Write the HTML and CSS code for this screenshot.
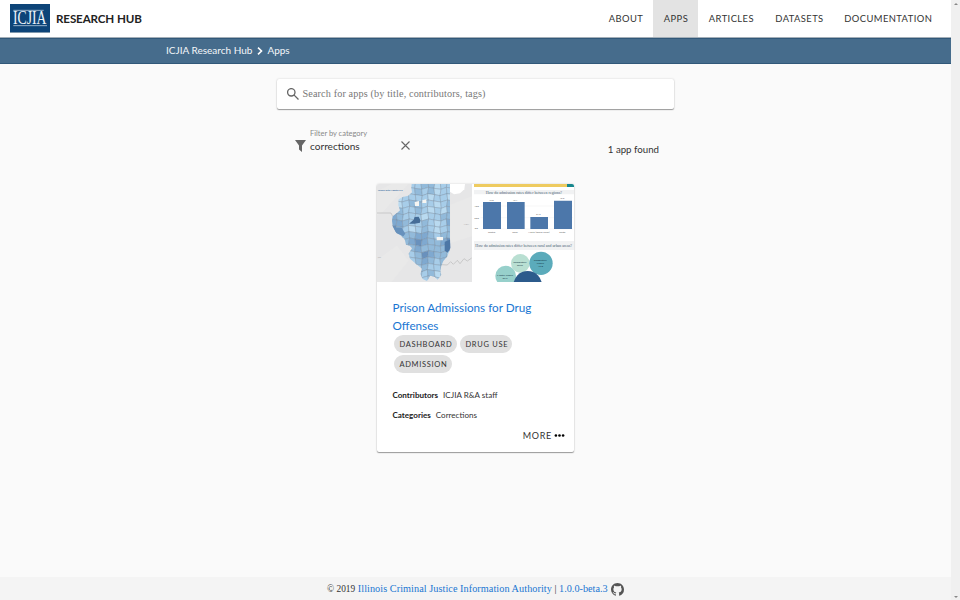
FILE: index.html
```html
<!DOCTYPE html>
<html lang="en">
<head>
<meta charset="utf-8">
<title>ICJIA Research Hub - Apps</title>
<link rel="stylesheet" href="styles.css">
</head>
<body>
<div class="page">
  <header class="topbar">
    <svg class="logo" viewBox="0 0 120 87"><path fill="#0d4478" d="M0 0h120v87H0z"/><path fill="#8098ad" d="M0 84h120v3H0z"/><path stroke="#dce8f1" stroke-width="2" d="M10 19h91M10 65h101"/><text x="9" y="59" textLength="100" lengthAdjust="spacingAndGlyphs" class="logo-text">ICJIA</text></svg>
    <span class="brand">RESEARCH HUB</span>
    <nav class="nav"><a class="about">ABOUT</a><a class="active">APPS</a><a class="articles">ARTICLES</a><a class="datasets">DATASETS</a><a class="docs">DOCUMENTATION</a></nav>
  </header>
  <div class="crumbs"><span>ICJIA Research Hub</span><svg viewBox="0 0 6 8"><path d="M1 .7 4.5 4 1 7.3" fill="none" stroke="#fff" stroke-width="1.6"/></svg><span>Apps</span></div>
  <main>
    <div class="search"><svg viewBox="0 0 12 12"><circle cx="4.3" cy="4.3" r="3.7"/><path d="m6.9 6.9 4.6 4.6"/></svg><span>Search for apps (by title, contributors, tags)</span></div>
    <div class="filters">
      <svg class="funnel" viewBox="0 0 11 12"><path d="M0 0h11L7 5.4V12L4 9.5V5.4z" fill="#666"/></svg>
      <div class="field"><label>Filter by category</label><span>corrections</span></div>
      <svg class="clear" viewBox="0 0 9 9"><path d="m.5.5 8 8m0-8-8 8" stroke="#666" stroke-width="1.1"/></svg>
      <span class="count">1 app found</span>
    </div>
    <article class="card">
      <div class="picture">
        <svg class="map" viewBox="21 18 285 294">
          <defs><clipPath id="state"><path d="M125 18H240V180L241 211 232 235 220 249 214 263 211 280 214 290 203 305 194 296 181 293 171 309 158 303 151 288 156 272 142 261 120 242 116 227 126 211 119 203 108 200 104 184 91 172 77 162 68 145 66 128 68 115 80 106 90 97 85 82 86 64 98 57 115 53 126 43 124 30z"/></clipPath></defs>
          <path fill="#e6e6e7" d="M21 18h285v294H21z"/>
          <path fill="#e9e9e9" d="M21 40 65 18h50L40 100 21 112zM21 245l60-42 35 45-51 64H21zM241 80l65-25v120l-65 20z"/>
          <path fill="#fff" d="M234 18h51l-2 16-13 12-18 3-12-8z"/>
          <path d="M21 105h42l5 10M214 260l18 1 10-10 8 8 12-12 8 10 12-15 10 7 13-9" fill="none" stroke="#aaa" stroke-width="1.5"/>
          <g id="counties" clip-path="url(#state)"></g>
          <path fill="#456d98" d="m117 137 14-12 3-8 12-1 5 10-1 8-16 3z"/>
          <path fill="#6791bc" d="m70 148 25 1 11 18-6 8-20-9z"/>
          <path fill="#4d77a6" d="m224 191 16-6 1 25-8 14-9-6z"/>
          <path fill="#f6f5f2" d="M134 72l13-3v15h-12zM157 67l12-3v11h-12zM200 177h19v10h-19z"/>
          <text class="map-title" x="24" y="39" textLength="75">Illinois Total Admits: n.a.</text>
          <text class="place" x="281" y="141">INDIA</text><text class="place" x="23" y="240">URI</text>
        </svg>
        <svg class="charts" viewBox="12 18 300 294">
          <path fill="#fff" d="M12 18h300v294H12z"/><path fill="#eecb60" d="M12 18h279v9H12z"/><path fill="#17878d" d="M291 18h21v9h-21z"/>
          <path fill="#f1f2f3" d="M12 36h300v13H12zM12 189h300v27H12z"/>
          <text class="chart-title" x="47" y="47" textLength="229" lengthAdjust="spacingAndGlyphs">How do admission rates differ between regions?</text>
          <path stroke="#e8e8e8" d="M32 84h277M32 119h277M32 153h277"/>
          <path fill="#4c77aa" d="M39 72h54v81H39zM111 72h53v81h-53zM181 117h53v36h-53zM252 68h54v85h-54z"/>
          <g class="tiny"><text x="57" y="68">47.0</text><text x="128" y="68">47.1</text><text x="198" y="112">21.9</text><text x="269" y="64">49.6</text><text x="13" y="88">40.0</text><text x="13" y="123">20.0</text><text x="14" y="152">0.0</text><text x="54" y="164">Central</text><text x="127" y="164">Cook</text><text x="175" y="164" textLength="64">North (minus Cook)</text><text x="268" y="164">South</text></g>
          <text class="chart-title" x="16" y="206" textLength="290" lengthAdjust="spacingAndGlyphs">How do admission rates differ between rural and urban areas?</text>
          <circle cx="151" cy="256" r="28" fill="#b9dfd2"/><circle cx="213" cy="256" r="35" fill="#5babbb"/><circle cx="107" cy="294" r="31" fill="#97d0cb"/><circle cx="173" cy="322" r="43" fill="#2c5b8c"/>
          <g class="bubble"><text x="150" y="256">Completely</text><text x="150" y="265">Rural</text><text x="211" y="249">Completely</text><text x="211" y="258">Urban</text><text x="211" y="267">42.8</text><text x="105" y="294">Mostly Urban</text><text x="105" y="303">31.7</text></g>
        </svg>
      </div>
      <div class="content">
        <h2>Prison Admissions for Drug<br>Offenses</h2>
        <div class="tags"><span class="dash">DASHBOARD</span><span class="drug">DRUG USE</span><span class="adm">ADMISSION</span></div>
        <p><b>Contributors</b>ICJIA R&amp;A staff</p><p><b>Categories</b>Corrections</p>
        <div class="more"><span>MORE</span><svg viewBox="0 0 10 3"><circle cx="1.4" cy="1.5" r="1.3"/><circle cx="5" cy="1.5" r="1.3"/><circle cx="8.6" cy="1.5" r="1.3"/></svg></div>
      </div>
    </article>
  </main>
  <footer><span class="copy"><span class="year">© 2019</span> <a>Illinois Criminal Justice Information Authority</a> | <a>1.0.0-beta.3</a></span><svg viewBox="0 0 16 16"><path fill="#555" d="M8 0C3.58 0 0 3.58 0 8c0 3.54 2.29 6.53 5.47 7.59.4.07.55-.17.55-.38 0-.19-.01-.82-.01-1.49-2.01.37-2.53-.49-2.69-.94-.09-.23-.48-.94-.82-1.13-.28-.15-.68-.52-.01-.53.63-.01 1.08.58 1.23.82.72 1.21 1.87.87 2.33.66.07-.52.28-.87.51-1.07-1.78-.2-3.64-.89-3.64-3.95 0-.87.31-1.59.82-2.15-.08-.2-.36-1.02.08-2.12 0 0 .67-.21 2.2.82a7.6 7.6 0 0 1 4 0c1.53-1.04 2.2-.82 2.2-.82.44 1.1.16 1.92.08 2.12.51.56.82 1.27.82 2.15 0 3.07-1.87 3.75-3.65 3.95.29.25.54.73.54 1.48 0 1.07-.01 1.93-.01 2.2 0 .21.15.46.55.38A8 8 0 0 0 16 8c0-4.42-3.58-8-8-8z"/></svg></footer>
</div>
<div class="scrollbar"><i class="up"></i><i class="down"></i></div>
<script src="map.js"></script>
</body>
</html>
```
FILE: styles.css
```css
*{box-sizing:border-box}
body{margin:0;width:960px;height:600px;display:flex;overflow:hidden;background:#fafafa;font-family:Lato,sans-serif;color:#333}
svg{display:block;flex:none}
.page{width:951px;height:600px;display:flex;flex-direction:column}
.scrollbar{width:9px;background:#f0f0f0;display:flex;flex-direction:column;justify-content:space-between;align-items:center;padding:3px 0 2px}
.scrollbar i{border:2px solid transparent}
.up{border-bottom-color:#888!important;border-top:0!important}
.down{border-top-color:#888!important;border-bottom:0!important}
.topbar{height:38px;flex:none;background:#fff;border-bottom:1px solid #a4afb8;display:flex;align-items:center;padding-left:10px}
.logo{width:40px;height:29px;margin-right:6px;overflow:visible}
.logo-text{font:54px "Liberation Serif",serif;fill:#edf4fa}
.brand{font-size:11.6px;font-weight:700;color:#222;width:86px;white-space:nowrap;letter-spacing:-.12px}
.nav{display:flex;margin-left:auto;align-self:stretch;padding-right:9px}
.nav a{font-size:9.4px;letter-spacing:.42px;padding:0 0 1px 10.8px;display:flex;align-items:center;white-space:nowrap}
.nav .about{width:55px}.nav .active{background:#e3e3e3;width:45px}.nav .articles{width:66.5px}.nav .datasets{width:69px}.nav .docs{width:108.5px}
.crumbs{height:26px;flex:none;background:#466c8c;border-top:1px solid #315879;border-bottom:1px solid #315879;color:#f4f7fa;font-size:10px;display:flex;align-items:center;padding:0 0 2px 166px}
.crumbs svg{width:6px;height:8px;margin:2px 4px 0 5px}
main{flex:1;display:flex;flex-direction:column;align-items:center;padding-top:15px}
.search{width:397px;height:30px;background:#fff;border-radius:2px;box-shadow:0 1px 1px #999,0 0 2px #ccc;display:flex;align-items:center;padding-left:10px;font:10.2px "Liberation Serif",serif;color:#777}
.search svg{width:12px;height:12px;margin-right:3.5px;fill:none;stroke:#666;stroke-width:1.3}
.search span{letter-spacing:.13px;padding-bottom:1px}
.filters{width:397px;height:75px;display:flex;padding-top:19px;padding-left:18px}
.funnel{width:11px;height:12px;margin-top:12px}
.field{width:91px;margin-left:4px;display:flex;flex-direction:column}
.field label{font-size:7.5px;line-height:11px;color:#888}
.field span{font-size:10.1px;line-height:14px}
.clear{width:9px;height:9px;margin-top:13px}
.count{font-size:9.7px;margin-left:auto;margin-right:15px;line-height:12px;padding-top:15px}
.card{width:197px;height:268px;background:#fff;border-radius:2px;box-shadow:0 1px 1px #999,0 0 2px #ccc;overflow:hidden}
.picture{display:flex;gap:2px;height:98px}
.map{width:95px;height:98px}.charts{width:100px;height:98px}
#counties polygon{stroke:#72899d;stroke-width:1}
.map-title{font:bold 7px Lato,sans-serif;fill:#3568a0}
.place{font:6px Lato,sans-serif;fill:#aaa}
.chart-title{font:12px "Liberation Serif",serif;fill:#435a70}
.tiny{font:7px Lato,sans-serif;fill:#555}
.bubble{font:8px Lato,sans-serif;fill:#143748;text-anchor:middle}
.content{padding:17px 9px 0 15.5px}
h2{font-size:11.7px;line-height:17.5px;font-weight:400;color:#1976d2;margin:0;white-space:nowrap}
.tags{display:flex;flex-wrap:wrap;gap:2px 3px;padding-left:1.5px;margin-top:1px}
.tags span{height:18px;border-radius:9px;background:#e0e0e0;font-size:7.5px;letter-spacing:.7px;display:flex;align-items:center;padding-left:5.4px;white-space:nowrap}
.dash{width:63px}.drug{width:52px}.adm{width:58px}
p{font-size:8.05px;line-height:10px;margin:0 0 10px;display:flex;gap:5px;white-space:nowrap}
.tags + p{margin-top:17px}
p b{color:#222}
.more{display:flex;align-items:center;justify-content:flex-end;font-size:9px;letter-spacing:.7px;gap:2px;line-height:12px}
.more svg{width:11px;height:3px;margin-bottom:1px}
footer{height:23px;flex:none;background:#f4f4f4;display:flex;align-items:center;padding-left:327px;font:10.23px "Liberation Serif",serif}
.copy{width:281px;white-space:nowrap}
.year{font-size:9.4px}
.year + a{letter-spacing:.06px}
footer a{color:#1976d2}
footer svg{width:13px;height:13px;margin-left:3px;margin-top:1px}
```
FILE: map.js
```js
const shades = ['#b9daf0', '#a7cde9', '#92bada', '#7fa9d0', '#6991bd'];
const rows = ['1111122011','1001212011','1011110110','1012211012','2211210102','3211101122','3321121013','4210121012','1122332122','1123432234','0012322224','0011243221','0101232121','0011121111','0011112001','0010111111'];
const point = (c, r) => [60 + c * 19 + ((r * 17 + c * 7) % 5 - 2), 12 + r * 19 + (c % 3 - 1) * 3];
const group = document.getElementById('counties');
rows.forEach((row, r) => [...row].forEach((shade, c) => {
  const poly = document.createElementNS('http://www.w3.org/2000/svg', 'polygon');
  poly.setAttribute('points', [point(c, r), point(c + 1, r), point(c + 1, r + 1), point(c, r + 1)].join(' '));
  poly.setAttribute('fill', shades[shade]);
  group.append(poly);
}));
```
